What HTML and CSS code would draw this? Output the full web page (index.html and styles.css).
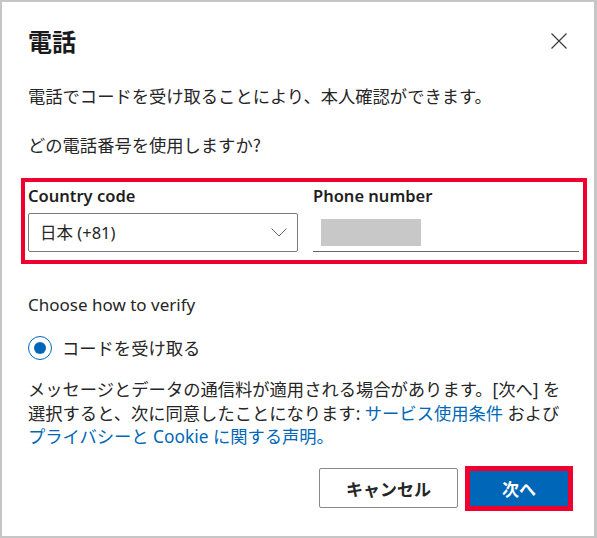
FILE: index.html
```html
<!DOCTYPE html>
<html lang="ja">
<head>
<meta charset="utf-8">
<title>電話</title>
<link rel="stylesheet" href="styles.css">
</head>
<body>
<div class="dialog">
  <div class="header">
    <h1 class="title">電話</h1>
    <button class="close" aria-label="閉じる">
      <svg width="16" height="16" viewBox="0 0 16 16"><path d="M0.5 0.5 L15.5 15.5 M15.5 0.5 L0.5 15.5" stroke="#3b3b3b" stroke-width="1.2" fill="none"/></svg>
    </button>
  </div>
  <p class="intro">電話でコードを受け取ることにより、本人確認ができます。</p>
  <p class="question">どの電話番号を使用しますか?</p>
  <div class="highlight fields">
    <div class="field country">
      <label class="label">Country code</label>
      <div class="select">
        <span>日本 (+81)</span>
        <svg class="chev" width="16" height="9" viewBox="0 0 16 9"><path d="M0.5 0.5 L8 8 L15.5 0.5" stroke="#6b6b6b" stroke-width="1" fill="none"/></svg>
      </div>
    </div>
    <div class="field phone">
      <label class="label">Phone number</label>
      <div class="input"><span class="masked"></span></div>
    </div>
  </div>
  <div class="verify-title">Choose how to verify</div>
  <div class="radio-row">
    <span class="radio"><span class="dot"></span></span>
    <span class="radio-text">コードを受け取る</span>
  </div>
  <p class="terms">メッセージとデータの通信料が適用される場合があります。[次へ] を<br>選択すると、次に同意したことになります: <a class="link">サービス使用条件</a> および<br><a class="link">プライバシーと Cookie に関する声明。</a></p>
  <div class="actions">
    <button class="btn secondary">キャンセル</button>
    <button class="btn primary">次へ</button>
  </div>
</div>
</body>
</html>
```

FILE: styles.css
```css
* { box-sizing: border-box; }
html, body { margin: 0; padding: 0; background: #ffffff; }
body {
  font-family: "Segoe UI", "Noto Sans", "Noto Sans CJK JP", sans-serif;
  color: #262626;
  font-size: 16px;
}
.dialog {
  width: 597px;
  height: 538px;
  border-style: solid;
  border-color: #c6c6c6;
  border-width: 2px 3px 2px 2px;
  padding: 23px 14px 0 26px;
  display: flex;
  flex-direction: column;
}
.header {
  height: 32px;
  display: flex;
  align-items: center;
  justify-content: space-between;
}
.title {
  margin: 0;
  font-size: 24px;
  line-height: 32px;
  font-weight: 700;
  color: #1b1b1b;
  font-family: "Noto Sans CJK JP", sans-serif;
}
.close {
  border: 0;
  background: none;
  padding: 0;
  margin-right: 13px;
  width: 16px;
  height: 16px;
  display: flex;
}
.intro, .question {
  margin: 29px 0 0;
  font-size: 17.3px;
  line-height: 20px;
  font-family: "Noto Sans CJK JP", sans-serif;
}
.highlight {
  border: 4px solid #f0002e;
}
.fields {
  margin: 23px -7px 0;
  padding: 4px 4px 8px 3px;
  display: flex;
  gap: 15px;
}
.field { display: flex; flex-direction: column; }
.country { width: 270px; }
.phone { flex: 1; }
.label {
  font-size: 16.5px;
  line-height: 20px;
  font-weight: 600;
  color: #1f1f1f;
  margin-bottom: 7px;
}
.select {
  height: 39px;
  border: 1px solid #7a7a7a;
  border-radius: 2px;
  display: flex;
  align-items: center;
  justify-content: space-between;
  padding: 0 10px 0 11px;
  font-size: 16.5px;
  font-family: "Noto Sans", "Noto Sans CJK JP", sans-serif;
}
.select span { line-height: 20px; }
.input {
  height: 39px;
  border-bottom: 1px solid #666666;
  display: flex;
  align-items: center;
  padding-left: 8px;
}
.masked {
  width: 100px;
  height: 27px;
  background: #c8c8c8;
}
.verify-title {
  margin-top: 31px;
  font-size: 17px;
  line-height: 20px;
  color: #262626;
}
.radio-row {
  margin-top: 21px;
  height: 24px;
  display: flex;
  align-items: center;
  gap: 10px;
}
.radio {
  width: 24px;
  height: 24px;
  border: 1px solid #0067b8;
  border-radius: 50%;
  display: flex;
  align-items: center;
  justify-content: center;
}
.dot {
  width: 12px;
  height: 12px;
  border-radius: 50%;
  background: #0067b8;
}
.radio-text {
  font-size: 17.3px;
  line-height: 20px;
  font-family: "Noto Sans CJK JP", sans-serif;
}
.terms {
  margin: 18px 0 0;
  font-size: 17.3px;
  line-height: 23.5px;
  font-family: "Noto Sans", "Noto Sans CJK JP", sans-serif;
  white-space: nowrap;
}
.link { color: #0067b8; text-decoration: none; }
.actions {
  margin-top: 17px;
  margin-right: 7px;
  display: flex;
  justify-content: flex-end;
  align-items: center;
  gap: 7px;
}
.btn {
  font-family: "Noto Sans CJK JP", sans-serif;
  font-weight: 700;
  font-size: 17px;
  cursor: pointer;
}
.secondary {
  width: 139px;
  height: 40px;
  background: #ffffff;
  color: #262626;
  border: 1px solid #8a8a8a;
  border-radius: 2px;
}
.primary {
  width: 108px;
  height: 45px;
  background: #0067b8;
  color: #ffffff;
  border: 5px solid #f0002e;
}
```
